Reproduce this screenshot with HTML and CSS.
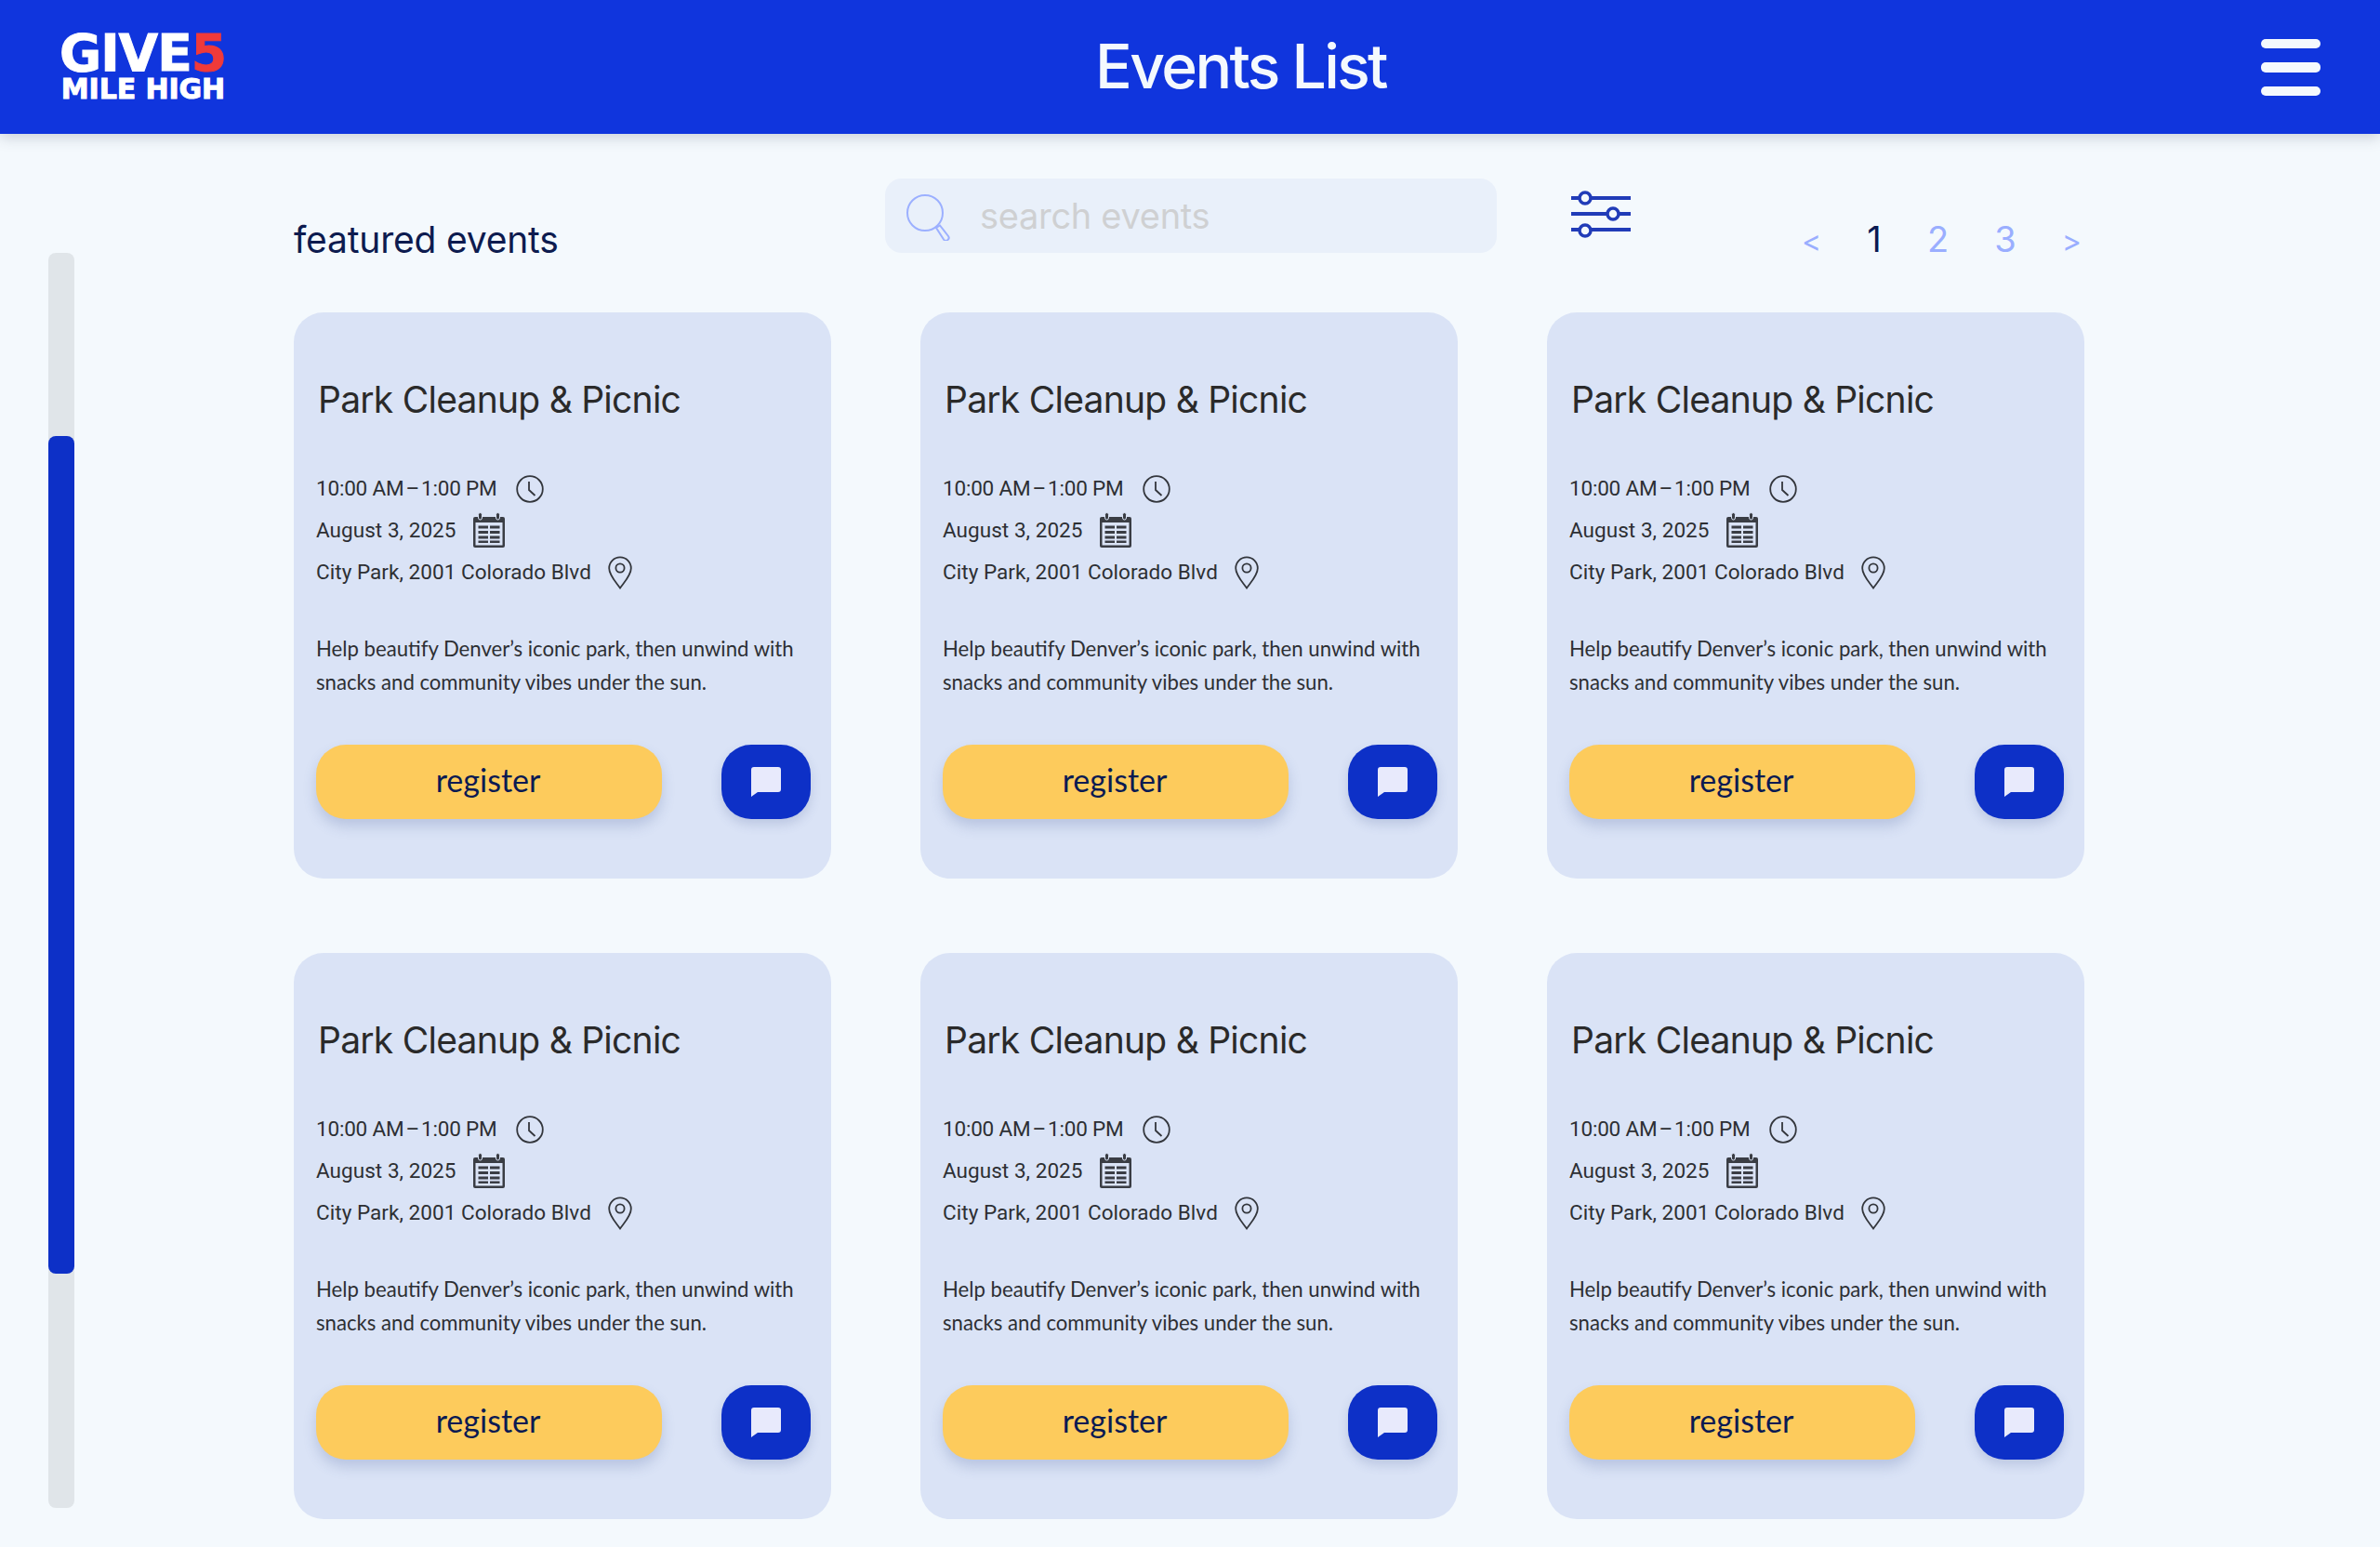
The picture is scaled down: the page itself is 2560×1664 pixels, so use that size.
FILE: index.html
```html
<!DOCTYPE html>
<html>

<head>
    <title>Events List</title>
    <link rel="stylesheet" href="styles.css">
</head>

<body>
    <svg class="icon-defs" width="0" height="0">
        <symbol id="clock" viewBox="0 0 30 30">
            <circle cx="15" cy="15" r="13.800" fill="none" stroke="#33363c" stroke-width="1.800" />
            <path d="M14 7v9l6.500 6" fill="none" stroke="#33363c" stroke-width="1.800" />
        </symbol>
        <symbol id="calendar" viewBox="0 0 34 38">
            <path d="M2 5h30a2 2 0 0 1 2 2v29a2 2 0 0 1-2 2H2a2 2 0 0 1-2-2V7a2 2 0 0 1 2-2z" fill="#3a3d44" />
            <rect x="2.500" y="11" width="29" height="24.500" fill="#dae3f6" />
            <rect x="5.500" y="0.500" width="4" height="7.500" rx="2" fill="#3a3d44" stroke="#dae3f6" stroke-width="1" />
            <rect x="24.500" y="0.500" width="4" height="7.500" rx="2" fill="#3a3d44" stroke="#dae3f6" stroke-width="1" />
            <path d="M5.500 14.500h10.500v3H5.500zM18 14.500h10.500v3H18zM5.500 20h10.500v3H5.500zM18 20h10.500v3H18zM5.500 25.500h10.500v3H5.500zM18 25.500h10.500v3H18zM5.500 30.500h10.500v2.500H5.500zM18 30.500h10.500v2.500H18z" fill="#3a3d44" />
        </symbol>
        <symbol id="pin" viewBox="0 0 26 36">
            <path d="M13 34.500C8 27.500 1.200 20.500 1.200 13.200a11.800 11.800 0 0 1 23.600 0C24.800 20.500 18 27.500 13 34.500z" fill="none" stroke="#33363c" stroke-width="1.800" />
            <circle cx="13" cy="13" r="4.600" fill="none" stroke="#33363c" stroke-width="1.800" />
        </symbol>
        <symbol id="chat" viewBox="0 0 32 32">
            <path d="M3 0h26a3 3 0 0 1 3 3v21a3 3 0 0 1-3 3H7l-7 5V3a3 3 0 0 1 3-3z" fill="#e8eafc" />
        </symbol>
    </svg>

    <div class="topbar">
        <div class="logo">
            <div class="logo-give">GIVE<span class="logo-five">5</span></div>
            <div class="logo-mile">MILE HIGH</div>
        </div>
        <h1 class="page-title">Events List</h1>
        <div class="hamburger">
            <span></span>
            <span class="thick"></span>
            <span></span>
        </div>
    </div>

    <div class="page">
        <div class="scroll-track">
            <div class="scroll-thumb"></div>
        </div>

        <div class="content">
            <div class="toolbar">
                <h2 class="featured">featured events</h2>
                <div class="search">
                    <svg class="search-icon" width="52" height="50" viewBox="0 0 52 50">
                        <circle cx="22" cy="20" r="19" fill="none" stroke="#9cb0ff" stroke-width="2" />
                        <path d="M34 36l4-2.500 9 11.500a3 3 0 0 1-5 3.500z" fill="none" stroke="#9cb0ff" stroke-width="2" />
                    </svg>
                    <span class="search-text">search events</span>
                </div>
                <svg class="filter" width="64" height="52" viewBox="0 0 64 52">
                    <path d="M0 8h64M0 25h64M0 42h64" stroke="#213cb8" stroke-width="4" stroke-linecap="round" />
                    <circle cx="15" cy="8" r="6" fill="#f4f9fd" stroke="#213cb8" stroke-width="3.500" />
                    <circle cx="45" cy="25" r="6" fill="#f4f9fd" stroke="#213cb8" stroke-width="3.500" />
                    <circle cx="15" cy="43" r="6" fill="#f4f9fd" stroke="#213cb8" stroke-width="3.500" />
                </svg>
                <div class="pager">
                    <span class="pager-arrow">&lt;</span>
                    <span class="pager-num current">1</span>
                    <span class="pager-num">2</span>
                    <span class="pager-num">3</span>
                    <span class="pager-arrow">&gt;</span>
                </div>
            </div>

            <div class="cards" id="cards"></div>
        </div>
    </div>

    <script>
        const cards = document.getElementById("cards");

        for (let i = 0; i < 6; i++) {
            cards.innerHTML += `
                <div class="card">
                    <h3 class="card-title">Park Cleanup &amp; Picnic</h3>
                    <div class="meta time">10:00 AM&hairsp;–&hairsp;1:00 PM <svg class="clock" width="30" height="30"><use href="#clock" /></svg></div>
                    <div class="meta">August 3, 2025 <svg class="calendar" width="34" height="38"><use href="#calendar" /></svg></div>
                    <div class="meta">City Park, 2001 Colorado Blvd <svg class="pin" width="26" height="36"><use href="#pin" /></svg></div>
                    <p class="desc">Help beautify Denver’s iconic park, then unwind with snacks and community vibes under the sun.</p>
                    <div class="actions">
                        <button class="register">register</button>
                        <button class="chat"><svg width="32" height="32"><use href="#chat" /></svg></button>
                    </div>
                </div>`;
        }
    </script>
</body>

</html>
```

FILE: styles.css
```css
* {
    box-sizing: border-box;
}

body {
    margin: 0;
    width: 2560px;
    height: 1664px;
    overflow: hidden;
    background-color: #f4f9fd;
    font-family: Inter, sans-serif;
}

.icon-defs {
    display: block;
    height: 0;
}

/* Top bar */
.topbar {
    height: 144px;
    background-color: #1035dd;
    box-shadow: 0 4px 14px rgba(60, 70, 90, 0.22);
    display: flex;
    align-items: center;
    justify-content: space-between;
    padding: 0 64px;
}

.logo {
    width: 178px;
    color: #fff;
    font-family: "DejaVu Sans", sans-serif;
    font-weight: 700;
    text-align: right;
    white-space: nowrap;
    margin-top: -1px;
    -webkit-text-stroke: 1px #fff;
}

.logo-give {
    font-size: 55px;
    line-height: 46px;
    letter-spacing: -1px;
}

.logo-five {
    color: #f03a3a;
    -webkit-text-stroke: 1px #f03a3a;
}

.logo-mile {
    font-size: 30px;
    line-height: 26px;
    margin-top: 3px;
    letter-spacing: -0.100px;
}

.page-title {
    margin: -2px 0 0 -5px;
    color: #f4f9fd;
    font-size: 66px;
    font-weight: 500;
    letter-spacing: -2.650px;
}

.hamburger {
    width: 64px;
    display: flex;
    flex-direction: column;
    gap: 15px;
}

.hamburger span {
    height: 10px;
    border-radius: 5px;
    background-color: #f4f9fd;
}

.hamburger .thick {
    height: 11px;
}

/* Page body */
.page {
    display: flex;
    padding-left: 52px;
}

.scroll-track {
    width: 28px;
    height: 1350px;
    margin-top: 128px;
    border-radius: 8px;
    background-color: #e0e5e9;
    padding-top: 197px;
}

.scroll-thumb {
    height: 901px;
    border-radius: 8px;
    background-color: #0d30c7;
}

.content {
    width: 1926px;
    margin-left: 236px;
    padding-top: 48px;
}

.toolbar {
    height: 80px;
    display: flex;
    align-items: flex-start;
}

.featured {
    width: 636px;
    margin: 36px 0 0;
    color: #0d1b4f;
    font-size: 39px;
    line-height: 60px;
    font-weight: 400;
    letter-spacing: -0.200px;
    white-space: nowrap;
}

.search {
    width: 658px;
    height: 80px;
    border-radius: 18px;
    background-color: #e9f0fa;
    display: flex;
    align-items: center;
    padding-left: 21px;
}

.search-icon {
    margin-top: 4px;
}

.search-text {
    margin-left: 29px;
    color: #cfd0d2;
    font-size: 38px;
    letter-spacing: -0.300px;
}

.filter {
    margin: 13px 0 0 80px;
}

.pager {
    margin-left: auto;
    width: 304px;
    padding: 42px 3px 0 0;
    display: flex;
    justify-content: space-between;
    align-items: baseline;
    color: #9aaeff;
    font-size: 38px;
    line-height: 46px;
}

.pager-arrow {
    font-size: 32px;
}

.pager .current {
    color: #0a1a52;
}

.cards {
    margin-top: 64px;
    display: grid;
    grid-template-columns: repeat(3, 578px);
    column-gap: 96px;
    row-gap: 80px;
}

/* Event card */
.card {
    height: 609px;
    border-radius: 32px;
    background-color: #dae3f6;
    padding: 69px 22px 0 24px;
}

.card-title {
    margin: 0 0 0 2px;
    color: #2a2a2a;
    font-size: 39px;
    line-height: 50px;
    font-weight: 400;
    letter-spacing: -0.750px;
    white-space: nowrap;
}

.meta {
    height: 45px;
    display: flex;
    align-items: center;
    gap: 18px;
    color: #2d2f33;
    font-family: Roboto, sans-serif;
    font-size: 22.500px;
    letter-spacing: 0.050px;
}

.meta.time {
    letter-spacing: -0.200px;
}

.card-title + .meta {
    margin-top: 47px;
}

.clock {
    margin: 2px 0 0 2px;
}

.pin {
    margin-top: 2px;
}

.desc {
    height: 72px;
    margin: 43px 0 0;
    color: #2d2f33;
    font-family: Lato, sans-serif;
    font-size: 22.150px;
    line-height: 36px;
}

.actions {
    margin-top: 49px;
    display: flex;
    justify-content: space-between;
}

.actions button {
    height: 80px;
    border: none;
    padding: 0;
}

.register {
    width: 372px;
    border-radius: 32px;
    background-color: #fdcb5c;
    box-shadow: 0 8px 14px rgba(70, 90, 150, 0.22);
    color: #0a1a52;
    font-family: Lato, sans-serif;
    font-size: 34px;
    padding: 0 2px 6px 0 !important;
}

.chat {
    width: 96px;
    border-radius: 32px;
    background-color: #0d30c7;
    box-shadow: 0 6px 12px rgba(70, 90, 150, 0.2);
    display: flex;
    align-items: center;
    justify-content: center;
}
```
